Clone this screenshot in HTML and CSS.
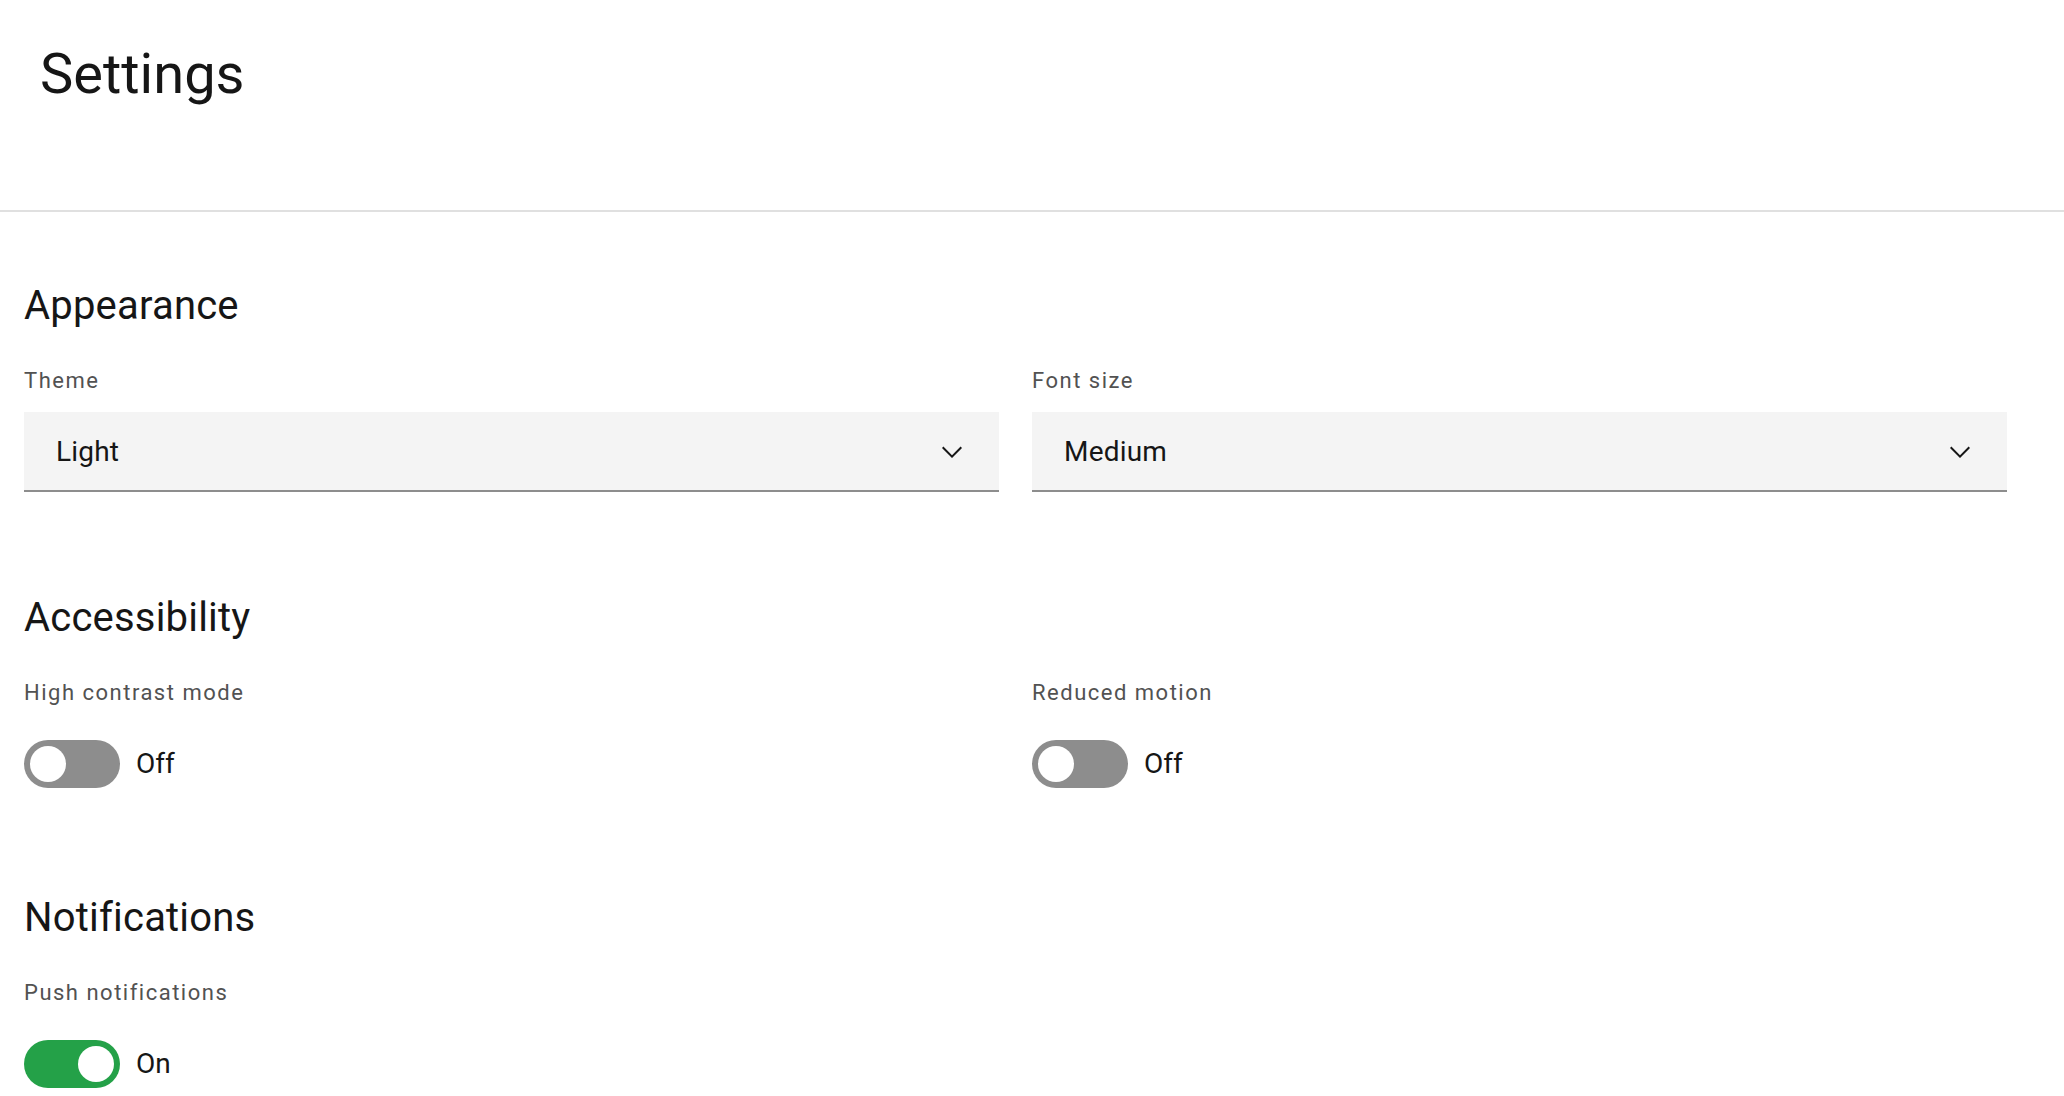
FILE: index.html
```html
<!DOCTYPE html>
<html lang="en">
<head>
<meta charset="utf-8">
<title>Settings</title>
<link rel="stylesheet" href="styles.css">
</head>
<body>
  <header class="page-header">
    <h1 class="page-title">Settings</h1>
  </header>
  <main class="content">
    <section class="section">
      <h2 class="section-title">Appearance</h2>
      <div class="grid">
        <div class="field">
          <div class="label">Theme</div>
          <div class="select">
            <span class="select-value">Light</span>
            <svg class="chevron" viewBox="0 0 16 16" width="32" height="32" aria-hidden="true"><path d="M8 11L3 6 3.7 5.3 8 9.6 12.3 5.3 13 6z"/></svg>
          </div>
        </div>
        <div class="field">
          <div class="label">Font size</div>
          <div class="select">
            <span class="select-value">Medium</span>
            <svg class="chevron" viewBox="0 0 16 16" width="32" height="32" aria-hidden="true"><path d="M8 11L3 6 3.7 5.3 8 9.6 12.3 5.3 13 6z"/></svg>
          </div>
        </div>
      </div>
    </section>

    <section class="section section-toggles">
      <h2 class="section-title">Accessibility</h2>
      <div class="grid">
        <div class="field field-toggle">
          <div class="label">High contrast mode</div>
          <div class="toggle-row">
            <span class="track"><span class="knob"></span></span>
            <span class="toggle-text">Off</span>
          </div>
        </div>
        <div class="field field-toggle">
          <div class="label">Reduced motion</div>
          <div class="toggle-row">
            <span class="track"><span class="knob"></span></span>
            <span class="toggle-text">Off</span>
          </div>
        </div>
      </div>
    </section>

    <section class="section section-toggles">
      <h2 class="section-title">Notifications</h2>
      <div class="grid">
        <div class="field field-toggle">
          <div class="label">Push notifications</div>
          <div class="toggle-row">
            <span class="track track-on"><span class="knob"></span></span>
            <span class="toggle-text">On</span>
          </div>
        </div>
      </div>
    </section>
  </main>
</body>
</html>
```
FILE: styles.css
```css
* {
  box-sizing: border-box;
}

html, body {
  margin: 0;
  padding: 0;
  background: #ffffff;
}

body {
  font-family: Roboto, "Noto Sans", "Liberation Sans", sans-serif;
  color: #161616;
  overflow: hidden;
}

.page-header {
  padding: 38px 40px 100px;
  border-bottom: 2px solid #e0e0e0;
}

.page-title {
  margin: 0;
  font-size: 56px;
  line-height: 72px;
  font-weight: 400;
  color: #161616;
}

.content {
  padding: 70px 57px 0 24px;
}

.section + .section {
  margin-top: 102px;
}

.section-title {
  margin: 0;
  font-size: 40px;
  line-height: 48px;
  font-weight: 400;
  letter-spacing: 0.2px;
  color: #161616;
}

.grid {
  display: grid;
  grid-template-columns: 1fr 1fr;
  column-gap: 33px;
  margin-top: 37px;
}

.field {
  display: flex;
  flex-direction: column;
}

.field-toggle {
  padding-bottom: 4px;
}

.label {
  font-size: 22px;
  line-height: 28px;
  letter-spacing: 1.5px;
  color: #525252;
}

.select {
  margin-top: 17px;
  height: 80px;
  background: #f4f4f4;
  border-bottom: 2px solid #8d8d8d;
  display: flex;
  align-items: center;
  justify-content: space-between;
  padding: 2px 31px 0 32px;
}

.select-value {
  font-size: 28px;
  line-height: 36px;
  letter-spacing: 0.2px;
  color: #161616;
}

.chevron {
  fill: #161616;
  display: block;
}

.toggle-row {
  margin-top: 33px;
  display: flex;
  align-items: center;
  height: 48px;
}

.track {
  width: 96px;
  height: 48px;
  border-radius: 24px;
  background: #8d8d8d;
  display: flex;
  align-items: center;
  justify-content: flex-start;
  padding: 0 6px;
  flex-shrink: 0;
}

.track-on {
  background: #24a148;
  justify-content: flex-end;
}

.knob {
  width: 36px;
  height: 36px;
  border-radius: 50%;
  background: #ffffff;
}

.toggle-text {
  margin-left: 16px;
  font-size: 28px;
  line-height: 36px;
  color: #161616;
}
```
